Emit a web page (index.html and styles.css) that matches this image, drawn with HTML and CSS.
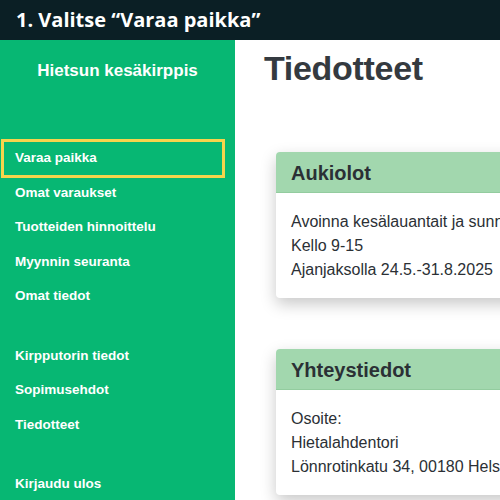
FILE: index.html
```html
<!DOCTYPE html>
<html lang="fi">
<head>
    <meta charset="UTF-8">
    <meta name="viewport" content="width=device-width, initial-scale=1.0">
    <title>Hietsun kesäkirppis - Tiedotteet</title>
    <link rel="stylesheet" href="styles.css">
</head>
<body>
<div class="banner">1. Valitse “Varaa paikka”</div>

<div class="app">
    <nav class="sidebar">
        <div class="brand">Hietsun kesäkirppis</div>

        <div class="nav-group">
            <a class="nav-link highlight" href="#">Varaa paikka</a>
            <a class="nav-link" href="#">Omat varaukset</a>
            <a class="nav-link" href="#">Tuotteiden hinnoittelu</a>
            <a class="nav-link" href="#">Myynnin seuranta</a>
            <a class="nav-link" href="#">Omat tiedot</a>
        </div>

        <div class="nav-group">
            <a class="nav-link" href="#">Kirpputorin tiedot</a>
            <a class="nav-link" href="#">Sopimusehdot</a>
            <a class="nav-link" href="#">Tiedotteet</a>
        </div>

        <div class="nav-group">
            <a class="nav-link" href="#">Kirjaudu ulos</a>
        </div>
    </nav>

    <main class="content">
        <h1>Tiedotteet</h1>

        <section class="card">
            <div class="card-header">Aukiolot</div>
            <div class="card-body">
                <p>Avoinna kesälauantait ja sunnuntait</p>
                <p>Kello 9-15</p>
                <p>Ajanjaksolla 24.5.-31.8.2025</p>
            </div>
        </section>

        <section class="card">
            <div class="card-header">Yhteystiedot</div>
            <div class="card-body">
                <p>Osoite:</p>
                <p>Hietalahdentori</p>
                <p>Lönnrotinkatu 34, 00180 Helsinki</p>
            </div>
        </section>
    </main>
</div>
</body>
</html>
```

FILE: styles.css
```css
* {
    margin: 0;
    padding: 0;
    box-sizing: border-box;
}

body {
    font-family: "Liberation Sans", Arial, sans-serif;
    background-color: #ffffff;
    color: #212529;
    overflow: hidden;
}

.banner {
    height: 40px;
    line-height: 39px;
    padding-left: 16px;
    background-color: #0b1f25;
    color: #ffffff;
    font-family: "Open Sans", sans-serif;
    font-weight: bold;
    font-size: 20px;
    white-space: nowrap;
}

.app {
    display: flex;
    height: 460px;
}

/* sidebar */
.sidebar {
    flex: 0 0 235px;
    background-color: #07b773;
    padding-top: 21px;
}

.brand {
    color: #ffffff;
    font-weight: bold;
    font-size: 17px;
    line-height: 20px;
    text-align: center;
    margin-bottom: 60px;
}

.nav-group {
    margin-bottom: 25px;
}

.nav-link {
    display: block;
    width: 220px;
    margin-left: 3px;
    padding-left: 12px;
    line-height: 34.5px;
    font-size: 13.5px;
    font-weight: bold;
    color: #ffffff;
    text-decoration: none;
    white-space: nowrap;
}

.nav-link.highlight {
    outline: 3px solid #f6d44c;
    outline-offset: -1px;
}

/* main content */
.content {
    flex: 1;
    padding-left: 29px;
    overflow: hidden;
}

h1 {
    font-size: 34px;
    font-weight: bold;
    color: #343a40;
    line-height: 40px;
    margin-top: 8px;
    margin-bottom: 64px;
    letter-spacing: -0.3px;
}

.card {
    width: 320px;
    margin-left: 12px;
    margin-bottom: 51px;
    background-color: #ffffff;
    border-radius: 4px;
    box-shadow: 0 6px 16px rgba(0, 0, 0, 0.22);
    overflow: hidden;
}

.card-header {
    background-color: #a2d7ae;
    border-bottom: 1px solid #93cc9f;
    padding: 9px 15px 7px;
    font-size: 20px;
    line-height: 24px;
    font-weight: bold;
    color: #2b3035;
}

.card-body {
    padding: 16.5px 15px;
    font-size: 16px;
    line-height: 24px;
    color: #2b3035;
    white-space: nowrap;
}
```
